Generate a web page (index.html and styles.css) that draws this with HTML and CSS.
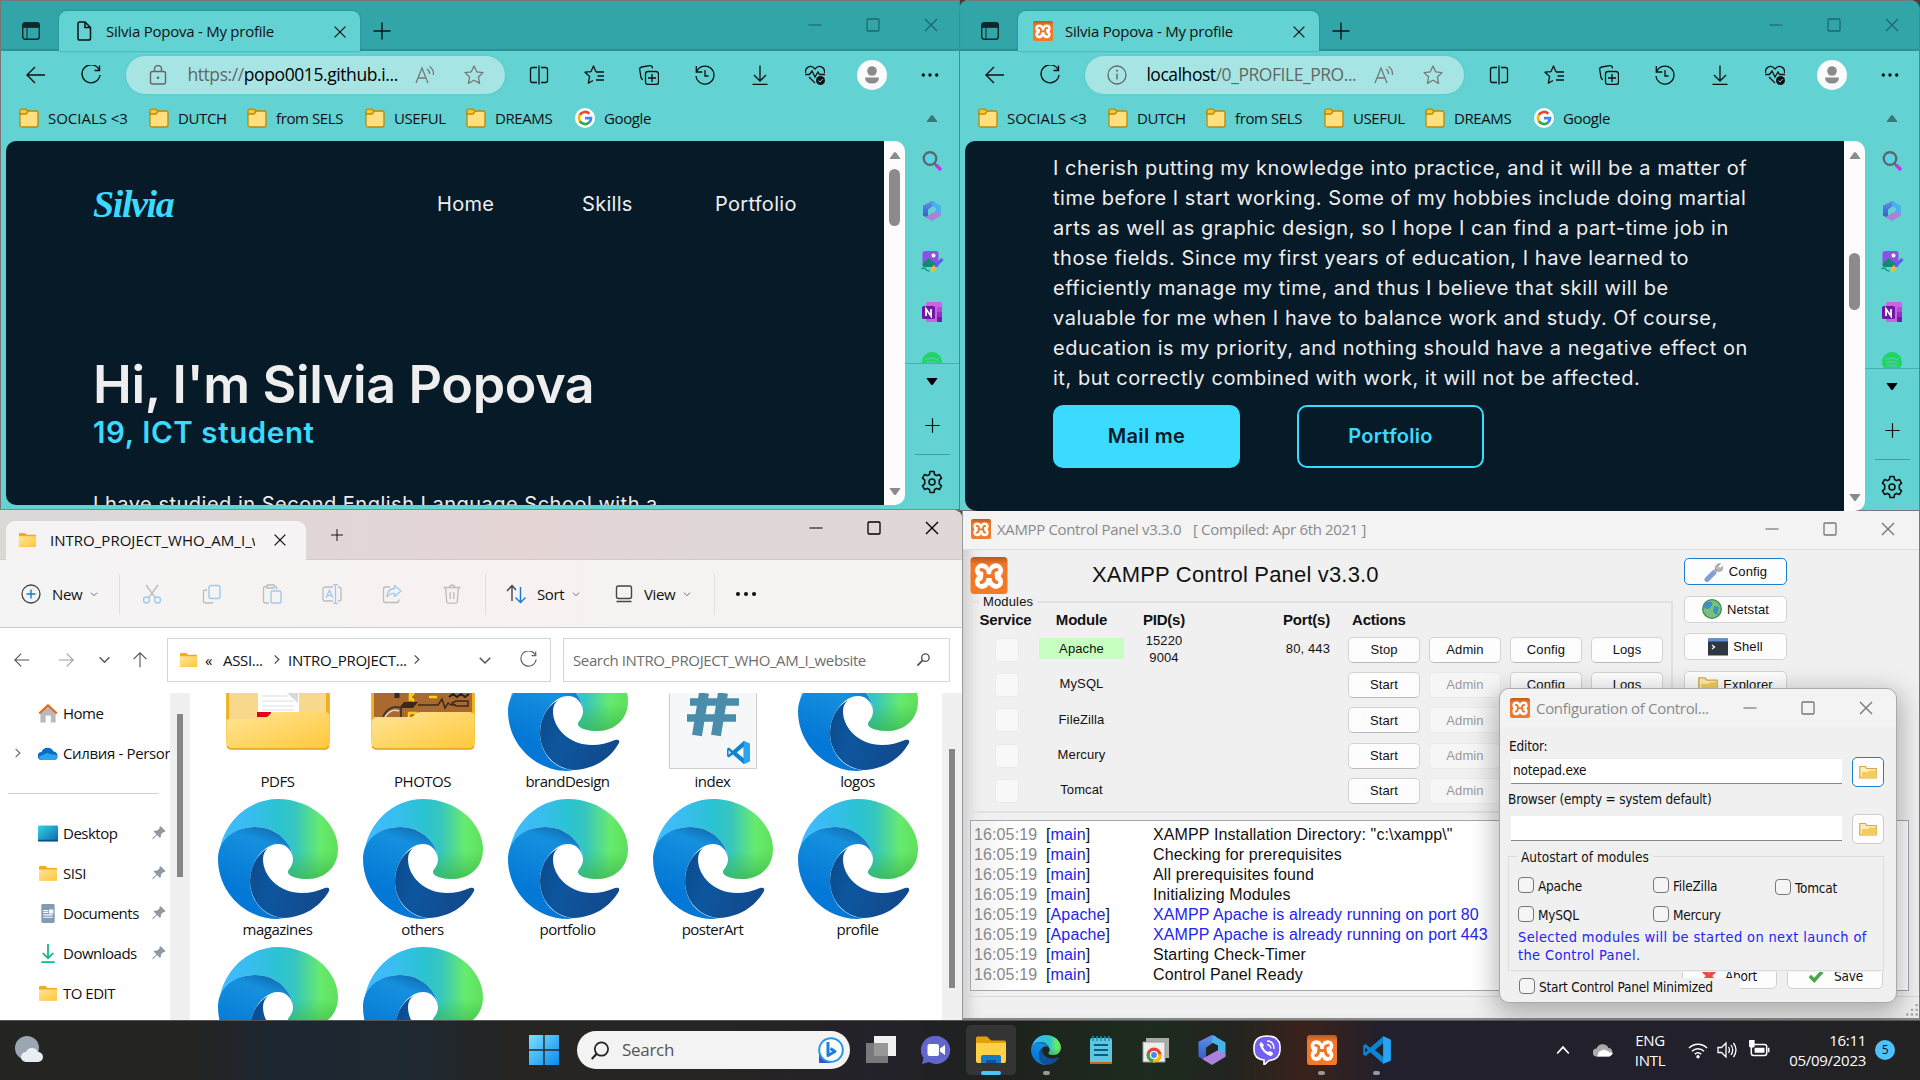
FILE: index.html
```html
<!DOCTYPE html>
<html lang="en">
<head>
<meta charset="utf-8">
<title>Desktop</title>
<link rel="stylesheet" href="styles.css">
</head>
<body>
<svg class="defs" aria-hidden="true">
  <defs>
    <linearGradient id="gTeal" x1="0" y1=".5" x2="1" y2=".5"><stop offset="0" stop-color="#42bbff"/><stop offset=".25" stop-color="#38bdf0"/><stop offset=".5" stop-color="#2bc3d2"/><stop offset=".64" stop-color="#36c6c0"/><stop offset=".85" stop-color="#66eb6e"/><stop offset="1" stop-color="#5fe05a"/></linearGradient>
    <linearGradient id="gShade" x1="0" y1="0" x2="0" y2="1"><stop offset=".55" stop-color="#3bb54a" stop-opacity="0"/><stop offset="1" stop-color="#3bb54a" stop-opacity=".75"/></linearGradient>
    <linearGradient id="gBlue" x1=".6" y1="0" x2=".3" y2="1"><stop offset="0" stop-color="#1272b8"/><stop offset=".15" stop-color="#1590de"/><stop offset=".7" stop-color="#0478d6"/></linearGradient>
    <linearGradient id="gNavy" x1="0" y1="0" x2="1" y2=".3"><stop offset="0" stop-color="#0b4a8c"/><stop offset=".4" stop-color="#0d569e"/><stop offset="1" stop-color="#124a8e"/></linearGradient>
    <linearGradient id="gFold" x1="0" y1="0" x2="1" y2="1"><stop offset="0" stop-color="#ffe596"/><stop offset="1" stop-color="#ffc83a"/></linearGradient>
    <linearGradient id="gDesk" x1="0" y1="0" x2="1" y2="1"><stop offset="0" stop-color="#34d6e4"/><stop offset="1" stop-color="#0a64b4"/></linearGradient>
    <linearGradient id="g365" x1="0" y1="0" x2="0" y2="1"><stop offset="0" stop-color="#6f8be8"/><stop offset=".5" stop-color="#3f78d8"/><stop offset="1" stop-color="#4a50c0"/></linearGradient>
    <linearGradient id="gOrange" x1="0" y1="0" x2="0" y2="1"><stop offset="0" stop-color="#b85b1c"/><stop offset=".2" stop-color="#f0762a"/><stop offset="1" stop-color="#f47a25"/></linearGradient>
    <linearGradient id="gWin" x1="0" y1="0" x2="1" y2="1"><stop offset="0" stop-color="#7ce0fb"/><stop offset="1" stop-color="#0a8bf0"/></linearGradient>
  </defs>
  <symbol id="edge" viewBox="0 0 120 120">
    <path id="edgeTop" fill="url(#gTeal)" d="M1 56C4 24 30 0 60 0c33 0 60 24 60 50 0 18-13 30-31 30-10 0-19-3-19-7 0-3 5-5 5-13C75 48 62 28 37 28 18 28 3 40 1 56Z"/>
    <path fill="url(#gShade)" d="M75 60C75 48 85 20 110 18c7 9 10 20 10 32 0 18-13 30-31 30-10 0-19-3-19-7 0-3 5-5 5-13Z"/>
    <path fill="url(#gBlue)" d="M0 60C0 42 15 28 37 28c21 0 37 15 38 32-1-9-7-15-15-15-14 0-28 18-28 37 0 22 16 37 34 37l-6 1C27 120 0 93 0 60Z"/>
    <path fill="url(#gNavy)" d="M50 49c-12 7-18 20-18 33 0 21 16 36 34 37 20-1 36-11 45-27 1-3-1-4-4-3-7 3-15 5-23 5-22 0-39-16-39-34 0-5 2-8 5-11Z"/>
  </symbol>
  <symbol id="xampp" viewBox="0 0 24 24"><rect width="24" height="24" rx="2.500" fill="url(#gOrange)"/><g fill="#fff"><circle cx="7.600" cy="8.800" r="4.700"/><circle cx="16.400" cy="8.800" r="4.700"/><circle cx="7.600" cy="16" r="4.700"/><circle cx="16.400" cy="16" r="4.700"/><path d="M8 7.800h8v9H8z"/></g><g fill="none" stroke="#f27526" stroke-width="2.300" stroke-linecap="round" stroke-linejoin="round"><path d="M7 8.300c2.300 0 2.800 1.600 2.400 3.900-.3 2.200-.3 3.900-2.400 4.200M17 8.300c-2.300 0-2.800 1.600-2.400 3.900.3 2.200.3 3.900 2.400 4.200M9.500 12.400h5"/></g></symbol>
  <symbol id="workspace" viewBox="0 0 20 20"><rect x="1.700" y="1.700" width="16.600" height="16.600" rx="2.500" fill="none" stroke="#0c2a2c" stroke-width="1.400"/><path d="M1.700 4.500q0-2.800 2.800-2.800h11q2.800 0 2.800 2.800v1.800H1.700zM6 6v12" fill="#0c2a2c" stroke="#0c2a2c"/></symbol>
  <symbol id="page" viewBox="0 0 20 20"><path d="M4 2.800Q4 1 5.800 1H11l5.500 5.500v10.700q0 1.800-1.800 1.800H5.800Q4 19 4 17.200zM11 1v5.500h5.500" fill="none" stroke="#111" stroke-width="1.500"/></symbol>
  <symbol id="close" viewBox="0 0 20 20"><path d="M4 4l12 12M16 4L4 16" stroke="currentColor" stroke-width="1.400"/></symbol>
  <symbol id="plus" viewBox="0 0 20 20"><path d="M10 1.500v17M1.500 10h17" stroke="currentColor" stroke-width="1.400"/></symbol>
  <symbol id="min" viewBox="0 0 20 20"><path d="M3.500 10h13" stroke="currentColor" stroke-width="1.200"/></symbol>
  <symbol id="max" viewBox="0 0 20 20"><rect x="4" y="4" width="12" height="12" rx="1" fill="none" stroke="currentColor" stroke-width="1.300"/></symbol>
  <symbol id="back" viewBox="0 0 20 20"><path d="M19 10H1.500M9 2L1 10l8 8" fill="none" stroke="currentColor" stroke-width="1.400"/></symbol>
  <symbol id="refresh" viewBox="0 0 20 20"><path d="M18 4.500A9 9 0 1 0 19 10M18.500 .5v5h-5" fill="none" stroke="currentColor" stroke-width="1.400"/></symbol>
  <symbol id="lock" viewBox="0 0 20 20"><rect x="2.500" y="6.500" width="15" height="12.500" rx="2" fill="none" stroke="#666" stroke-width="1.400"/><path d="M6.500 6.500V4a3.500 3.500 0 0 1 7 0v2.500" fill="none" stroke="#666" stroke-width="1.400"/><circle cx="10" cy="12.700" r="1.300" fill="#666"/></symbol>
  <symbol id="info" viewBox="0 0 20 20"><circle cx="10" cy="10" r="9" fill="none" stroke="#666" stroke-width="1.300"/><path d="M10 8.500v6" stroke="#666" stroke-width="1.400"/><circle cx="10" cy="5.800" r="1" fill="#666"/></symbol>
  <symbol id="read" viewBox="0 0 20 20"><path d="M1 18L7 3l6 15M3 13h8M12 4q3 2 2.500 5M14.500 1.500Q19 4.500 18.500 10" fill="none" stroke="#777" stroke-width="1.300"/></symbol>
  <symbol id="star" viewBox="0 0 20 20"><path d="M10 1l2.700 5.800 6.300.8-4.600 4.400 1.200 6.400L10 15.300l-5.600 3.100 1.200-6.400L1 7.600l6.300-.8z" fill="none" stroke="#777" stroke-width="1.300" stroke-linejoin="round"/></symbol>
  <symbol id="split" viewBox="0 0 20 20"><path d="M8 2.500H3.500q-2 0-2 2v11q0 2 2 2H8M12 2.500h4.500q2 0 2 2v11q0 2-2 2H12M10 .5v19" fill="none" stroke="#111" stroke-width="1.300"/></symbol>
  <symbol id="favs" viewBox="0 0 20 20"><path d="M13 6.800L11.800 6.600 9.500 1 7 6.600l-6 .6 4.600 4.300-1.300 6.700 4.700-2.700M12 7h8M13.500 11H20M12 15h8" fill="none" stroke="#111" stroke-width="1.300" stroke-linejoin="round"/></symbol>
  <symbol id="collect" viewBox="0 0 20 20"><rect x="6.500" y="6.500" width="13" height="13" rx="2.500" fill="none" stroke="#111" stroke-width="1.300"/><path d="M13 9v8M9 13h8M4 14.500Q2.500 14.500 2 12.500L.7 4.500Q.5 2.500 2.500 2L11 .7q2.200-.2 2.500 2.500" fill="none" stroke="#111" stroke-width="1.300"/></symbol>
  <symbol id="history" viewBox="0 0 20 20"><path d="M1.500 7A9 9 0 1 1 1 11M1.300 1v6h6M10 5v6h3.500" fill="none" stroke="#111" stroke-width="1.300"/></symbol>
  <symbol id="download" viewBox="0 0 20 20"><path d="M10 .5v15M4 10l6 6 6-6M2.500 19.300h15" fill="none" stroke="#111" stroke-width="1.300"/></symbol>
  <symbol id="health" viewBox="0 0 20 20"><path d="M.5 8C-.3 2 6-1 10 4c4-5 10.300-2 9.500 4M0 9.500h4.500L7 6l3 6 3-5 1.500 2.500H20M4 12l6 6" fill="none" stroke="#111" stroke-width="1.300"/><circle cx="15.500" cy="15.500" r="4.500" fill="#111"/><path d="M13.500 15.500l1.500 1.500 2.700-3" fill="none" stroke="#62d2d3" stroke-width="1"/></symbol>
  <symbol id="avatar" viewBox="0 0 30 30"><circle cx="15" cy="15" r="15" fill="#fbfbfb"/><circle cx="15" cy="11" r="4.800" fill="#8b8b8b"/><path d="M8 17.500h14q0 6-7 6t-7-6z" fill="#8b8b8b"/></symbol>
  <symbol id="dots" viewBox="0 0 20 20"><g fill="#111"><circle cx="3.300" cy="10" r="1.700"/><circle cx="10" cy="10" r="1.700"/><circle cx="16.700" cy="10" r="1.700"/></g></symbol>
  <symbol id="bookmark" viewBox="0 0 20 20"><rect x="1" y="3" width="18" height="16" rx="2" fill="#ffdf7e" stroke="#b98a0d" stroke-width="1.300"/><path d="M1 6V3q0-1.800 1.800-1.800H7L9 3.500 7 6z" fill="#ffc929" stroke="#b98a0d" stroke-width="1.300"/></symbol>
  <symbol id="google" viewBox="0 0 20 20"><circle cx="10" cy="10" r="10" fill="#fff"/><g fill="none" stroke-width="2.700"><path d="M14.300 5.700A6 6 0 0 0 4.800 7" stroke="#ea4335"/><path d="M4.800 7a6 6 0 0 0 0 6" stroke="#fbbc05"/><path d="M4.800 13a6 6 0 0 0 9.200 1.500" stroke="#34a853"/><path d="M14 14.500q2-1.900 2-4.300H10" stroke="#4285f4"/></g></symbol>
  <symbol id="triUp" viewBox="0 0 12 12"><path d="M1 10h10q1 0 0-1L7 3.500q-1-1-2 0L1 9q-1 1 0 1z" fill="currentColor"/></symbol>
  <symbol id="triDown" viewBox="0 0 12 12"><path d="M1 2h10q1 0 0 1L7 8.500q-1 1-2 0L1 3q-1-1 0-1z" fill="currentColor"/></symbol>
  <symbol id="lens" viewBox="0 0 20 20"><path d="M14 14l5 5" stroke="#d02ff0" stroke-width="3.500"/><path d="M11.500 11.500l3 3" stroke="#6b5f78" stroke-width="2"/><circle cx="8" cy="7.500" r="6.300" fill="#5ad3e2" stroke="#5b6468" stroke-width="2.200"/></symbol>
  <symbol id="m365" viewBox="0 0 20 20"><path d="M10 0L1 4.500v10l5 2.800V8.500l6.500-4.700V.8z" fill="url(#g365)"/><path d="M11 .3L19 5v9l-5-2.800V7l-4.500-2.300z" fill="#45b4ea"/><path d="M3.500 16L10 20l9-5.500v-1.800l-5.500-2.400L6 14.500z" fill="#ad80dc"/></symbol>
  <symbol id="image" viewBox="0 0 22 22"><rect x="1" y="0" width="16" height="16" rx="2.500" fill="#8c52e6"/><circle cx="12" cy="4.500" r="2" fill="#fff"/><path d="M1 13l6-6 9 7q-1 2-3 2H4q-3 0-3-3z" fill="#138b68"/><path d="M21 8l-8 8" stroke="#5a5cf0" stroke-width="3"/><path d="M12 14l3 3q-2 5-6 4 1-5 3-7z" fill="#fbb634"/><path d="M0 18q3-2 4 0t4 2" fill="none" stroke="#119b76" stroke-width="1.500"/></symbol>
  <symbol id="onenote" viewBox="0 0 20 20"><rect x="4" y="0" width="16" height="20" rx="1.500" fill="#cb63e6"/><path d="M15 5h5v5h-5z" fill="#b04bd0"/><path d="M15 10h5v5h-5z" fill="#9332bf"/><path d="M15 15h5v5h-5z" fill="#7719aa"/><rect y="4" width="13" height="13" rx="1.500" fill="#6f18a5"/><path d="M4 14V7l5 7V7" fill="none" stroke="#fff" stroke-width="1.700"/></symbol>
  <symbol id="spotify" viewBox="0 0 20 20"><circle cx="10" cy="10" r="10" fill="#1ed760"/><path d="M4 7q7-2 12 1.200M5 10.500q6-1.800 10 1M5.500 13.800q5-1.200 8.500.8" fill="none" stroke="#53c6b5" stroke-width="1.600" stroke-linecap="round"/></symbol>
  <symbol id="gear" viewBox="0 0 24 24"><path d="M10 1.500h4l.6 3 2 1.100 2.900-1 2 3.500-2.200 2v3.800l2.200 2-2 3.500-2.900-1-2 1.100-.6 3h-4l-.6-3-2-1.100-2.900 1-2-3.500 2.200-2v-3.800l-2.200-2 2-3.500 2.900 1 2-1.100z" fill="none" stroke="#111" stroke-width="1.600" stroke-linejoin="round"/><circle cx="12" cy="12" r="3" fill="none" stroke="#111" stroke-width="1.600"/></symbol>
  <symbol id="folder" viewBox="0 0 20 16"><path d="M1 1.500Q1 .5 2 .5h5.500l2 2H18q1 0 1 1V15H1z" fill="#f3ac18"/><path d="M1 4h18v10q0 1-1 1H2q-1 0-1-1z" fill="url(#gFold)"/></symbol>
  <symbol id="chev" viewBox="0 0 12 12"><path d="M1.500 4l4.500 4.500L10.500 4" fill="none" stroke="currentColor" stroke-width="1.300"/></symbol>
  <symbol id="chevR" viewBox="0 0 12 12"><path d="M4 1.500L8.500 6 4 10.500" fill="none" stroke="currentColor" stroke-width="1.500"/></symbol>
  <symbol id="newItem" viewBox="0 0 20 20"><circle cx="10" cy="10" r="9" fill="none" stroke="#444" stroke-width="1.300"/><path d="M10 5.500v9M5.500 10h9" stroke="#0f7bd3" stroke-width="1.400"/></symbol>
  <symbol id="cut" viewBox="0 0 20 20"><path d="M4 1l9.500 13M16 1L6.500 14" stroke="#bdbdbd" stroke-width="1.300"/><g fill="none" stroke="#9ccbee" stroke-width="1.400"><circle cx="4.500" cy="16" r="3"/><circle cx="15.500" cy="16" r="3"/></g></symbol>
  <symbol id="copy" viewBox="0 0 20 20"><path d="M5 6H3.500q-2 0-2 2v9q0 2 2 2H9q2 0 2-1" fill="none" stroke="#bdbdbd" stroke-width="1.300"/><rect x="7" y="1.500" width="11" height="13" rx="2" fill="none" stroke="#9ccbee" stroke-width="1.400"/></symbol>
  <symbol id="paste" viewBox="0 0 20 20"><path d="M5 2.500H3.500q-2 0-2 2V17q0 2 2 2H7M13 2.500q2 0 2 3M5 1h7v3H5z" fill="none" stroke="#bdbdbd" stroke-width="1.300"/><rect x="9" y="7" width="10" height="12" rx="1.500" fill="none" stroke="#9ccbee" stroke-width="1.400"/></symbol>
  <symbol id="rename" viewBox="0 0 20 20"><path d="M11 3H3Q1 3 1 5v10q0 2 2 2h8M16 3q3 0 3 2v10q0 2-3 2" fill="none" stroke="#bdbdbd" stroke-width="1.300"/><path d="M4 14l3.500-8L11 14M5 11.500h5M13.500.5v19M11 .5h5M11 19.500h5" fill="none" stroke="#9ccbee" stroke-width="1.300"/></symbol>
  <symbol id="share" viewBox="0 0 20 20"><path d="M8 3H3.500q-2 0-2 2v11.500q0 2 2 2H15q2 0 2-3" fill="none" stroke="#bdbdbd" stroke-width="1.300"/><path d="M12.500 1.500L19 7l-6.500 5.500V9.500Q8 9 5 13q0-8 7.500-8.500z" fill="none" stroke="#9ccbee" stroke-width="1.300" stroke-linejoin="round"/></symbol>
  <symbol id="trash" viewBox="0 0 20 20"><path d="M1.500 3.500h17M7.500 3.500q0-2.500 2.500-2.500t2.500 2.500M3.500 4l1.300 14q.2 1.200 1.500 1.200h7.400q1.300 0 1.500-1.200L16.500 4M8.200 8v7M11.800 8v7" fill="none" stroke="#bdbdbd" stroke-width="1.300"/></symbol>
  <symbol id="sort" viewBox="0 0 20 20"><path d="M6 17V2M1 7l5-5.500L10 6" fill="none" stroke="#444" stroke-width="1.400"/><path d="M14.500 3v15M9.500 13.500l5 5 5-5" fill="none" stroke="#0f7bd3" stroke-width="1.400"/></symbol>
  <symbol id="view" viewBox="0 0 20 20"><rect x="2.500" y="2" width="15" height="12.500" rx="2" fill="none" stroke="#444" stroke-width="1.400"/><path d="M2.500 17.500h15" stroke="#444" stroke-width="1.400"/></symbol>
  <symbol id="find" viewBox="0 0 16 16"><circle cx="10" cy="6" r="4" fill="none" stroke="#555" stroke-width="1.500"/><path d="M7 9l-5.500 5.500" stroke="#555" stroke-width="2"/></symbol>
  <symbol id="home" viewBox="0 0 20 20"><path d="M2 9l8-7 8 7v10.500h-5V12H7.500v7.500H2z" fill="#b9b9b9"/><path d="M.8 10L10 1.300 19.200 10" fill="none" stroke="#e06a1a" stroke-width="2.300" stroke-linejoin="round"/></symbol>
  <symbol id="cloud" viewBox="0 0 20 14"><path d="M4 13.500a4 4 0 0 1-.5-8A6.500 6.500 0 0 1 15.500 5 4.300 4.300 0 0 1 16 13.500z" fill="#0a6cc4"/><path d="M4 13.500Q1 13 1 10l8-3.500 5 1.500q6 0 5.500 3-.5 2.500-3.500 2.500z" fill="#2aa4ea"/></symbol>
  <symbol id="desktop" viewBox="0 0 20 16"><rect width="20" height="16" rx="1" fill="url(#gDesk)"/><path d="M0 15h20" stroke="#0b4f86" stroke-width="1.500"/></symbol>
  <symbol id="docs" viewBox="0 0 20 20"><rect x="3" width="14" height="20" rx="1.500" fill="#839bb5"/><path d="M5 7h5M5 9h5M5 11.500h10M5 14h10M11.500 6.500h3.500v3h-3.500z" stroke="#fff" stroke-width="1.200" fill="#fff"/></symbol>
  <symbol id="dl" viewBox="0 0 20 20"><path d="M10 0v15M4.500 9.500L10 15l5.500-5.500M3 19h14" fill="none" stroke="#18b493" stroke-width="1.900"/></symbol>
  <symbol id="pin" viewBox="0 0 14 14"><path d="M8.500 0L13.500 5l-1 1.200-1.200-.2-2.300 2.500q.3 2-1 3.500L5 9l-4.500 4.500V12L4.300 8.200 1.500 5.500q1.500-1.300 3.700-1l2.500-2.300-.2-1.200z" fill="#8d9aa4"/></symbol>
  <symbol id="globe" viewBox="0 0 20 20"><circle cx="10" cy="10" r="9.300" fill="#79c07c" stroke="#3f8d46" stroke-width="1.300"/><path d="M6 3q6-1 4 3t-5 4-3-3 4-4zM12 7l5 1-2 8-4-3z" fill="#3d8fc8"/></symbol>
  <symbol id="wrench" viewBox="0 0 20 20"><path d="M3 17.500l7-7" stroke="#7f9fd8" stroke-width="5" stroke-linecap="round"/><path d="M10 10l4-4" stroke="#a8acb0" stroke-width="3"/><path d="M18.500 4.500q1 5-4 5-4-1-3-5 1-3 5-3l-2.500 3 2 2z" fill="#b5b8bb" stroke="#888" stroke-width=".6"/></symbol>
  <symbol id="shell" viewBox="0 0 20 17"><rect width="20" height="17" fill="#2e3640"/><path d="M0 0h20v3H0z" fill="#5c8fd6"/><path d="M4 6.500l2.500 2L4 10.500" fill="none" stroke="#fff" stroke-width="1.300"/></symbol>
  <symbol id="yfold" viewBox="0 0 18 14"><path d="M.8 13V1.500h5.500l1.500 2h9.400V13z" fill="#fdeeb4" stroke="#dba445" stroke-width="1.200"/><path d="M3 13V7h6l1.500-1.500h6.700V13z" fill="#f3cd5b"/></symbol>
  <symbol id="vscode" viewBox="0 0 24 24"><path d="M17 1l6 2.700v16.600L17 23 6.500 13.800 2.800 16.800 1 15.700V8.300l1.800-1.100 3.700 3zM17 6.500L10.300 12l6.700 5.500zM2.500 9.800v4.400L4.800 12z" fill="#0d83d4" fill-rule="evenodd"/><path d="M17 1l6 2.700v16.600L17 23z" fill="#27a5f2"/></symbol>
  <symbol id="winlogo" viewBox="0 0 30 30"><path d="M0 0h14.300v14.300H0zM15.700 0H30v14.300H15.700zM0 15.700h14.300V30H0zM15.700 15.700H30V30H15.700z" fill="url(#gWin)"/></symbol>
  <symbol id="cssfile" viewBox="0 0 88 116"><rect x=".5" y=".5" width="87" height="115" fill="#f6f7f8" stroke="#cfcfcf"/><g stroke="#4a8dab" stroke-width="10"><path d="M35 40L28 82.500M54 40L47 82.500" /><path d="M21 49h49M18 65h49" stroke-width="7.500"/></g><use href="#vscode" x="57" y="87" width="25" height="25"/></symbol>
  <symbol id="bigfold" viewBox="0 0 106 96"><path d="M0 0h106v90H0z" fill="#f2b01f"/><path d="M3 0h99v70H3z" fill="#f7d88c"/></symbol>
  <symbol id="bigfoldFront" viewBox="0 0 106 40"><path d="M0 10Q0 7 4 7h32q4 0 7-3l2-2q2-2 6-2h49q6 0 6 5v28q0 5-5 5H5q-5 0-5-5z" fill="url(#gFold)"/><path d="M1 35q1 3 4 3h96q3 0 4-3" fill="none" stroke="#e0a21c" stroke-width="1.500"/></symbol>
</svg>

<div class="desktop">

<section class="win browser left">
  <header class="titlebar">
    <svg class="i20 ws"><use href="#workspace"/></svg>
    <div class="tab"><svg class="i20"><use href="#page"/></svg><span>Silvia Popova - My profile</span><svg class="tabx"><use href="#close"/></svg></div>
    <svg class="newtab"><use href="#plus"/></svg>
    <div class="wbtns"><svg><use href="#min"/></svg><svg><use href="#max"/></svg><svg><use href="#close"/></svg></div>
  </header>
  <div class="toolbar">
    <i class="cell"><svg class="i20"><use href="#back"/></svg></i><i class="cell"><svg class="i20"><use href="#refresh"/></svg></i>
    <div class="address"><svg class="i20"><use href="#lock"/></svg><span class="url"><span class="dim">https://</span>popo0015.github.i...</span><svg class="i20"><use href="#read"/></svg><svg class="i20 st"><use href="#star"/></svg></div>
    <i class="cell"><svg class="i20"><use href="#split"/></svg></i><i class="cell"><svg class="i20"><use href="#favs"/></svg></i><i class="cell"><svg class="i20"><use href="#collect"/></svg></i><i class="cell"><svg class="i20"><use href="#history"/></svg></i><i class="cell"><svg class="i20"><use href="#download"/></svg></i><i class="cell"><svg class="i20"><use href="#health"/></svg></i><i class="cell wide"><svg class="i30"><use href="#avatar"/></svg></i><i class="cell wide"><svg class="i20"><use href="#dots"/></svg></i>
  </div>
  <div class="favbar">
    <span class="f1"><svg class="i20"><use href="#bookmark"/></svg>SOCIALS &lt;3</span><span class="f2"><svg class="i20"><use href="#bookmark"/></svg>DUTCH</span><span class="f3"><svg class="i20"><use href="#bookmark"/></svg>from SELS</span><span class="f4"><svg class="i20"><use href="#bookmark"/></svg>USEFUL</span><span class="f5"><svg class="i20"><use href="#bookmark"/></svg>DREAMS</span><span class="f6"><svg class="i20"><use href="#google"/></svg>Google</span>
    <svg class="tri grey"><use href="#triUp"/></svg>
  </div>
  <div class="content">
    <main class="page hero">
      <nav><b class="logo">Silvia</b><a>Home</a><a>Skills</a><a>Portfolio</a></nav>
      <h1>Hi, I'm Silvia Popova</h1>
      <h2>19, ICT student</h2>
      <p>I have studied in Second English Language School with a</p>
    </main>
    <div class="scroll"><svg><use href="#triUp"/></svg><i class="thumb"></i><svg class="end"><use href="#triDown"/></svg></div>
    <aside class="side">
      <div class="apps"><svg><use href="#lens"/></svg><svg><use href="#m365"/></svg><svg class="img"><use href="#image"/></svg><svg><use href="#onenote"/></svg><svg><use href="#spotify"/></svg></div>
      <svg class="tri"><use href="#triDown"/></svg><svg class="add"><use href="#plus"/></svg><hr><svg class="gear"><use href="#gear"/></svg>
    </aside>
  </div>
</section>

<section class="win browser right">
  <header class="titlebar">
    <svg class="i20 ws"><use href="#workspace"/></svg>
    <div class="tab"><svg class="i20"><use href="#xampp"/></svg><span>Silvia Popova - My profile</span><svg class="tabx"><use href="#close"/></svg></div>
    <svg class="newtab"><use href="#plus"/></svg>
    <div class="wbtns"><svg><use href="#min"/></svg><svg><use href="#max"/></svg><svg><use href="#close"/></svg></div>
  </header>
  <div class="toolbar">
    <i class="cell"><svg class="i20"><use href="#back"/></svg></i><i class="cell"><svg class="i20"><use href="#refresh"/></svg></i>
    <div class="address"><svg class="i20"><use href="#info"/></svg><span class="url">localhost<span class="dim">/0_PROFILE_PRO...</span></span><svg class="i20"><use href="#read"/></svg><svg class="i20 st"><use href="#star"/></svg></div>
    <i class="cell"><svg class="i20"><use href="#split"/></svg></i><i class="cell"><svg class="i20"><use href="#favs"/></svg></i><i class="cell"><svg class="i20"><use href="#collect"/></svg></i><i class="cell"><svg class="i20"><use href="#history"/></svg></i><i class="cell"><svg class="i20"><use href="#download"/></svg></i><i class="cell"><svg class="i20"><use href="#health"/></svg></i><i class="cell wide"><svg class="i30"><use href="#avatar"/></svg></i><i class="cell wide"><svg class="i20"><use href="#dots"/></svg></i>
  </div>
  <div class="favbar">
    <span class="f1"><svg class="i20"><use href="#bookmark"/></svg>SOCIALS &lt;3</span><span class="f2"><svg class="i20"><use href="#bookmark"/></svg>DUTCH</span><span class="f3"><svg class="i20"><use href="#bookmark"/></svg>from SELS</span><span class="f4"><svg class="i20"><use href="#bookmark"/></svg>USEFUL</span><span class="f5"><svg class="i20"><use href="#bookmark"/></svg>DREAMS</span><span class="f6"><svg class="i20"><use href="#google"/></svg>Google</span>
    <svg class="tri grey"><use href="#triUp"/></svg>
  </div>
  <div class="content">
    <main class="page bio">
      <p>I cherish putting my knowledge into practice, and it will be a matter of<br>time before I start working. Some of my hobbies include doing martial<br>arts as well as graphic design, so I hope I can find a part-time job in<br>those fields. Since my first years of education, I have learned to<br>efficiently manage my time, and thus I believe that skill will be<br>valuable for me when I have to balance work and study. Of course,<br>education is my priority, and nothing should have a negative effect on<br>it, but correctly combined with work, it will not be affected.</p>
      <div class="ctas"><a class="cta solid">Mail me</a><a class="cta">Portfolio</a></div>
    </main>
    <div class="scroll"><svg><use href="#triUp"/></svg><i class="thumb"></i><svg class="end"><use href="#triDown"/></svg></div>
    <aside class="side">
      <div class="apps"><svg><use href="#lens"/></svg><svg><use href="#m365"/></svg><svg class="img"><use href="#image"/></svg><svg><use href="#onenote"/></svg><svg><use href="#spotify"/></svg></div>
      <svg class="tri"><use href="#triDown"/></svg><svg class="add"><use href="#plus"/></svg><hr><svg class="gear"><use href="#gear"/></svg>
    </aside>
  </div>
</section>

<section class="win explorer">
  <header class="extitle">
    <div class="extab"><svg class="fold"><use href="#folder"/></svg><span>INTRO_PROJECT_WHO_AM_I_w</span><svg class="i20"><use href="#close"/></svg></div>
    <svg class="explus"><use href="#plus"/></svg>
    <div class="wbtns"><svg><use href="#min"/></svg><svg><use href="#max"/></svg><svg><use href="#close"/></svg></div>
  </header>
  <div class="cmds">
    <span class="cmd new"><svg class="i20"><use href="#newItem"/></svg>New<svg class="cv"><use href="#chev"/></svg></span>
    <div class="grp"><svg class="i20"><use href="#cut"/></svg><svg class="i20"><use href="#copy"/></svg><svg class="i20"><use href="#paste"/></svg><svg class="i20"><use href="#rename"/></svg><svg class="i20"><use href="#share"/></svg><svg class="i20"><use href="#trash"/></svg></div>
    <span class="cmd sort"><svg class="i20"><use href="#sort"/></svg>Sort<svg class="cv"><use href="#chev"/></svg></span>
    <span class="cmd view"><svg class="i20"><use href="#view"/></svg>View<svg class="cv"><use href="#chev"/></svg></span>
    <svg class="more"><use href="#dots"/></svg>
  </div>
  <div class="navrow">
    <svg class="nb"><use href="#back"/></svg><svg class="nb fwd"><use href="#back"/></svg><svg class="nc"><use href="#chev"/></svg><svg class="nb parent"><use href="#back"/></svg>
    <div class="path"><svg class="fold"><use href="#folder"/></svg><span class="p0">«</span><span class="p1">ASSI...</span><svg class="cr"><use href="#chevR"/></svg><span class="p2">INTRO_PROJECT...</span><svg class="cr"><use href="#chevR"/></svg><svg class="nc2"><use href="#chev"/></svg><svg class="rf"><use href="#refresh"/></svg></div>
    <div class="search"><span>Search INTRO_PROJECT_WHO_AM_I_website</span><svg><use href="#find"/></svg></div>
  </div>
  <div class="exbody">
    <ul class="tree">
      <li><svg><use href="#home"/></svg><span>Home</span></li>
      <li class="od"><svg class="arr"><use href="#chevR"/></svg><svg><use href="#cloud"/></svg><span>Силвия - Personal</span></li>
      <li class="rule"></li>
      <li><svg><use href="#desktop"/></svg><span>Desktop</span><svg class="pin"><use href="#pin"/></svg></li>
      <li><svg><use href="#folder"/></svg><span>SISI</span><svg class="pin"><use href="#pin"/></svg></li>
      <li><svg><use href="#docs"/></svg><span>Documents</span><svg class="pin"><use href="#pin"/></svg></li>
      <li><svg><use href="#dl"/></svg><span>Downloads</span><svg class="pin"><use href="#pin"/></svg></li>
      <li><svg><use href="#folder"/></svg><span>TO EDIT</span></li>
    </ul>
    <div class="exscroll"><i></i></div>
    <div class="files">
      <figure><div class="bf"><svg class="bfb"><use href="#bigfold"/></svg><svg class="art" viewBox="0 0 106 24"><path d="M33 0h41v24H33z" fill="#fff"/><path d="M62 0l11 10v-10z" fill="#d9d9d9"/><path d="M37 3h26M37 8h32M37 13h32M37 17h32" stroke="#ddd"/><path d="M32 19h14v5H32z" fill="#e3001b"/></svg><svg class="bff"><use href="#bigfoldFront"/></svg></div><figcaption>PDFS</figcaption></figure>
      <figure><div class="bf"><svg class="bfb"><use href="#bigfold"/></svg><svg class="art" viewBox="0 0 106 24"><path d="M4 0h98v24H4z" fill="#a9692f"/><path d="M27 0v5" stroke="#3b2a1c" stroke-width="5"/><path d="M29 15l5-6h14l-5 6z" fill="#3b2a1c"/><path d="M48 12h20l4-6 3 9 3-5 3 2h5M82 10l4-2h12v5H86z" fill="none" stroke="#3b2a1c" stroke-width="1.500"/><path d="M13 24q6-13 18-9v9" fill="none" stroke="#4a3828" stroke-width="2"/><path d="M15 24q6-9 14-6" fill="none" stroke="#ddd" stroke-width="1.500"/><path d="M40 0v8M44 0l-4 4 4 4M59 4h8M39 24v-4h8" fill="none" stroke="#f7d117" stroke-width="2.500"/><path d="M79 4l4-3 4 3 4-3 4 3 4-3" fill="none" stroke="#222" stroke-width="2"/></svg><svg class="bff"><use href="#bigfoldFront"/></svg></div><figcaption>PHOTOS</figcaption></figure>
      <figure><svg class="big"><use href="#edge"/></svg><figcaption>brandDesign</figcaption></figure>
      <figure><svg class="css"><use href="#cssfile"/></svg><figcaption>index</figcaption></figure>
      <figure><svg class="big"><use href="#edge"/></svg><figcaption>logos</figcaption></figure>
      <figure><svg class="big"><use href="#edge"/></svg><figcaption>magazines</figcaption></figure>
      <figure><svg class="big"><use href="#edge"/></svg><figcaption>others</figcaption></figure>
      <figure><svg class="big"><use href="#edge"/></svg><figcaption>portfolio</figcaption></figure>
      <figure><svg class="big"><use href="#edge"/></svg><figcaption>posterArt</figcaption></figure>
      <figure><svg class="big"><use href="#edge"/></svg><figcaption>profile</figcaption></figure>
      <figure><svg class="big"><use href="#edge"/></svg></figure>
      <figure><svg class="big"><use href="#edge"/></svg></figure>
    </div>
    <div class="exscroll r"><i></i></div>
  </div>
</section>

<section class="win xampp">
  <header class="xtitle"><svg class="i20"><use href="#xampp"/></svg><span class="xt">XAMPP Control Panel v3.3.0</span><span class="xc">[ Compiled: Apr 6th 2021 ]</span><div class="wbtns"><svg><use href="#min"/></svg><svg><use href="#max"/></svg><svg><use href="#close"/></svg></div></header>
  <div class="xmain">
    <div class="xleft">
      <div class="xhead"><svg><use href="#xampp"/></svg><h3>XAMPP Control Panel v3.3.0</h3></div>
      <div class="modules">
        <span class="legend">Modules</span>
        <div class="mrow mh"><span>Service</span><span>Module</span><span>PID(s)</span><span class="port">Port(s)</span><span class="act">Actions</span></div>
        <div class="mrow"><i class="box"></i><span class="on">Apache</span><span class="pids">15220<br>9004</span><span class="port">80, 443</span><button>Stop</button><button>Admin</button><button>Config</button><button>Logs</button></div>
        <div class="mrow"><i class="box"></i><span>MySQL</span><span></span><span></span><button>Start</button><button class="off">Admin</button><button>Config</button><button>Logs</button></div>
        <div class="mrow"><i class="box"></i><span>FileZilla</span><span></span><span></span><button>Start</button><button class="off">Admin</button></div>
        <div class="mrow"><i class="box"></i><span>Mercury</span><span></span><span></span><button>Start</button><button class="off">Admin</button></div>
        <div class="mrow"><i class="box"></i><span>Tomcat</span><span></span><span></span><button>Start</button><button class="off">Admin</button></div>
      </div>
    </div>
    <div class="tools">
      <button class="focus"><svg class="i20"><use href="#wrench"/></svg>Config</button>
      <button><svg class="i20"><use href="#globe"/></svg>Netstat</button>
      <button><svg class="i20"><use href="#shell"/></svg>Shell</button>
      <button><svg class="i20"><use href="#yfold"/></svg>Explorer</button>
    </div>
  </div>
  <div class="log">
    <div><time>16:05:19</time><span>[<b>main</b>]</span><span>XAMPP Installation Directory: "c:\xampp\"</span></div>
    <div><time>16:05:19</time><span>[<b>main</b>]</span><span>Checking for prerequisites</span></div>
    <div><time>16:05:19</time><span>[<b>main</b>]</span><span>All prerequisites found</span></div>
    <div><time>16:05:19</time><span>[<b>main</b>]</span><span>Initializing Modules</span></div>
    <div><time>16:05:19</time><span>[<b>Apache</b>]</span><span class="bl">XAMPP Apache is already running on port 80</span></div>
    <div><time>16:05:19</time><span>[<b>Apache</b>]</span><span class="bl">XAMPP Apache is already running on port 443</span></div>
    <div><time>16:05:19</time><span>[<b>main</b>]</span><span>Starting Check-Timer</span></div>
    <div><time>16:05:19</time><span>[<b>main</b>]</span><span>Control Panel Ready</span></div>
  </div>
  <footer class="status"><svg viewBox="0 0 12 12"><path d="M9 0h2v2H9zM5 4h2v2H5zM9 4h2v2H9zM1 8h2v2H1zM5 8h2v2H5zM9 8h2v2H9z" fill="#aaa"/></svg></footer>
</section>

<section class="win dialog">
  <header class="dtitle"><svg class="i20"><use href="#xampp"/></svg><span>Configuration of Control...</span><div class="wbtns"><svg><use href="#min"/></svg><svg><use href="#max"/></svg><svg><use href="#close"/></svg></div></header>
  <div class="dbody">
    <label class="l1">Editor:</label>
    <div class="irow"><div class="input">notepad.exe</div><button class="focus"><svg><use href="#yfold"/></svg></button></div>
    <label class="l2">Browser (empty = system default)</label>
    <div class="irow"><div class="input"></div><button><svg><use href="#yfold"/></svg></button></div>
    <div class="auto">
      <span class="legend">Autostart of modules</span>
      <div class="checks"><label><i></i>Apache</label><label><i></i>FileZilla</label><label class="tc"><i></i>Tomcat</label><label><i></i>MySQL</label><label><i></i>Mercury</label></div>
      <p>Selected modules will be started on next launch of<br>the Control Panel.</p>
    </div>
    <div class="dfoot">
      <button class="abort"><svg viewBox="0 0 14 14"><path d="M1 1l12 12M13 1L1 13" stroke="#ef4a4a" stroke-width="4.500"/></svg>Abort</button>
      <button class="save"><svg viewBox="0 0 18 16"><path d="M2 8l5 5 9-10" fill="none" stroke="#4ba34a" stroke-width="4"/></svg>Save</button>
      <label class="mini"><i></i>Start Control Panel Minimized</label>
    </div>
  </div>
</section>

<footer class="taskbar">
  <svg class="weather" viewBox="0 0 30 30"><circle cx="14" cy="13" r="12" fill="#9aa7b2"/><path d="M13 27a5 5 0 0 1 0-10 6.500 6.500 0 0 1 12 0 5 5 0 0 1 0 10z" fill="#e8eef3"/></svg>
  <svg class="start"><use href="#winlogo"/></svg>
  <div class="tsearch"><svg class="mag" viewBox="0 0 20 20"><circle cx="11" cy="8.500" r="7" fill="none" stroke="#222" stroke-width="1.800"/><path d="M6 13.500L.8 19" stroke="#222" stroke-width="2.200"/></svg><span>Search</span><svg class="bing" viewBox="0 0 28 28"><path d="M2 14v12q0 1 1 1h11z" fill="#2f55d4"/><circle cx="14" cy="14" r="11.800" fill="#fff" stroke="#2399e6" stroke-width="2"/><path d="M11 6v13.500l7-4-4.500-3" fill="none" stroke="#1c7fe0" stroke-width="3" stroke-linejoin="round"/></svg></div>
  <div class="tasks">
    <span><svg viewBox="0 0 30 30"><path d="M8 1h22v20H8z" fill="#f1f1f1"/><path d="M0 8h22v20H0z" fill="#888" fill-opacity=".85"/></svg></span>
    <span><svg viewBox="0 0 30 30"><path d="M15 1a14 14 0 1 1-7 26l-7 2 1.500-6A14 14 0 0 1 15 1z" fill="#6266cc"/><rect x="6.500" y="9" width="11.500" height="12" rx="2" fill="#fff"/><path d="M19 13.500l5-3.500v10l-5-3.500z" fill="#fff"/></svg></span>
    <span class="active"><svg viewBox="0 0 30 30"><path d="M0 3q0-1.500 1.500-1.500H11l4 4h13.500Q30 5.500 30 7v8H0z" fill="#e4a008"/><path d="M0 8h30v18q0 2-2 2H2q-2 0-2-2z" fill="#ffd04a"/><path d="M5 28v-6q0-2 2-2h16q2 0 2 2v6z" fill="#1679cc"/><path d="M10 28v-3h10v3" fill="#0b5394"/></svg></span>
    <span class="run"><svg><use href="#edge"/></svg></span>
    <span><svg viewBox="0 0 30 30"><rect x="4" y="3" width="22" height="26" rx="2" fill="#5cc8de"/><path d="M4 27h22v2H4z" fill="#c46522"/><path d="M8 10h14M8 15h14M8 20h14" stroke="#0b5a87" stroke-width="1.800"/><path d="M7 1v5M11 1v5M15 1v5M19 1v5M23 1v5" stroke="#1d8fb8" stroke-width="1.500"/></svg></span>
    <span><svg viewBox="0 0 30 30"><path d="M5 3h23v20H5z" fill="#aaa"/><path d="M2 7h22v20H2z" fill="#eee" stroke="#999"/><circle cx="13" cy="20" r="7.500" fill="#e94435"/><path d="M13 20l-7-3a8 8 0 0 0 6 10.500z" fill="#34a853"/><path d="M13 20l7.500-1a8 8 0 0 1-8.500 8.500z" fill="#fbbc05"/><circle cx="13" cy="20" r="3.500" fill="#4285f4" stroke="#fff" stroke-width="1.200"/></svg></span>
    <span><svg><use href="#m365"/></svg></span>
    <span><svg viewBox="0 0 30 30"><path d="M15 1q12 0 13 10v5q-1 9-11 9.500L12 30v-5Q2 24 2 15v-4Q3 1 15 1z" fill="#7360f2" stroke="#fff" stroke-width="1.600"/><path d="M9 7q-2 1-1 4 3 7 10 10 3 0 3-3l-3-2-2 1q-4-2-5-5l1-2z" fill="#fff"/><path d="M15 6q7 0 7 8M15 9.500q3.500.5 4 4" fill="none" stroke="#fff" stroke-width="1.400"/></svg></span>
    <span class="run"><svg><use href="#xampp"/></svg></span>
    <span class="run"><svg><use href="#vscode"/></svg></span>
  </div>
  <div class="tray">
    <svg class="up" viewBox="0 0 12 12"><path d="M1 9l5-5.500L11 9" fill="none" stroke="#fff" stroke-width="1.400"/></svg>
    <svg class="cl" viewBox="0 0 20 14"><path d="M4 13.500a4 4 0 0 1-.5-8A6.500 6.500 0 0 1 15.500 5 4.300 4.300 0 0 1 16 13.500z" fill="#aaa"/><path d="M4 13.500l2-5 5-2 9 4-3.500 3z" fill="#fff"/></svg>
    <span class="lang">ENG<br>INTL</span>
    <svg class="wf" viewBox="0 0 20 20"><g fill="none" stroke="#fff" stroke-width="1.500"><path d="M1 8a12.500 12.500 0 0 1 18 0M4 11.200a8.500 8.500 0 0 1 12 0M6.800 14.200a4.500 4.500 0 0 1 6.400 0"/></g><circle cx="10" cy="16.800" r="1.700" fill="#fff"/></svg>
    <svg class="vol" viewBox="0 0 20 20"><path d="M1 7.500h3.500L9 3v14l-4.500-4.500H1zM11.500 7q2 3 0 6M14 5q3.500 5 0 10M16.500 3q5 7 0 14" fill="none" stroke="#fff" stroke-width="1.300"/></svg>
    <svg class="bat" viewBox="0 0 20 20"><rect x="3" y="5" width="14" height="10" rx="2" fill="none" stroke="#fff" stroke-width="1.400"/><path d="M6 8h9v4.500H6zM18 8h1.500v4H18zM1 1h5v6q-2.500 2-5 0z" fill="#fff"/></svg>
    <span class="clock">16:11<br>05/09/2023</span>
    <b class="badge">5</b>
  </div>
</footer>

</div>
</body>
</html>
```
FILE: styles.css
```css
* { box-sizing: border-box; }
body { margin: 0; overflow: hidden; background: #222; font: 15px/20px "Open Sans", "Noto Sans", sans-serif; letter-spacing: -.35px; color: #111; }
svg { display: block; flex: none; }
i { font-style: normal; }
button { font: inherit; letter-spacing: inherit; color: inherit; padding: 0; border: 0; }
h1, h2, h3, p, ul, figure { margin: 0; padding: 0; font-weight: 400; }
.defs { position: absolute; width: 0; height: 0; }
.desktop { position: relative; width: 1920px; height: 1080px; overflow: hidden; white-space: nowrap; background: #4d3c3c; }
.win { position: absolute; overflow: hidden; display: flex; flex-direction: column; }
.i20 { width: 20px; height: 20px; }
.i30 { width: 30px; height: 30px; }
.wbtns { display: flex; margin-left: auto; }
.wbtns svg { width: 20px; height: 20px; }

/* browser windows */
.browser { width: 960px; background: #62d2d3; box-shadow: inset 0 0 0 1px #777; }
.browser.left { left: 0; top: 0; height: 510px; }
.browser.right { left: 959px; top: 0; width: 961px; height: 511px; border-radius: 10px 10px 0 0; }
.titlebar { height: 50px; flex: none; display: flex; align-items: center; margin: 1px 1px 0; background: #32a5a9; box-shadow: inset 0 -2px 1px #2b8f93; }
.ws { margin: 10px 0 0 20px; }
.tab { align-self: flex-end; display: flex; align-items: center; width: 301px; height: 40px; margin-left: 18px; padding: 0 11px 1px 15px; background: #62d2d3; border-radius: 8px 8px 0 0; letter-spacing: -.24px; box-shadow: 0 0 2px #1b7f83; }
.tab span { margin-left: 12px; flex: 1; }
.tabx { width: 18px; height: 18px; margin-top: 2px; }
.newtab { width: 20px; height: 20px; margin: 10px 0 0 12px; }
.browser .wbtns { align-self: flex-start; margin-top: 14px; gap: 38px; margin-right: 17px; color: #1c6a6d; }
.left .wbtns { margin-right: 18px; }
.toolbar { display: flex; align-items: center; height: 48px; padding-left: 8px; flex: none; }
.cell { width: 55.2px; display: flex; justify-content: center; }
.cell.wide { width: 58px; }
.address { display: flex; align-items: center; width: 379px; height: 38px; margin: 0 6px 0 8px; padding: 0 21px 0 22px; border-radius: 19px; background: #a7e5e4; box-shadow: 0 0 3px #56c4c5; }
.right .address { margin-right: 7px; }
.url { flex: 1; margin-left: 19px; font-size: 17.500px; letter-spacing: -.41px; color: #000; position: relative; top: -1px; }
.dim { color: #666; }
.right .url { letter-spacing: -.45px; }
.st { margin-left: 29px; }
.favbar { display: flex; align-items: center; height: 42px; flex: none; padding: 0 21px 4px 19px; }
.favbar span { display: flex; align-items: center; gap: 9px; letter-spacing: -.4px; }
.favbar .f1 { width: 130px; letter-spacing: -.02px; }
.f2 { width: 98px; } .f3 { width: 118px; } .f4 { width: 101px; } .f5 { width: 109px; }
.tri { width: 14px; height: 12px; }
.tri.grey { margin-left: auto; color: #39797b; }
.content { display: flex; flex: 1; min-height: 0; padding-left: 6px; }
.left .content { padding-bottom: 5px; }
.page { width: 878px; background: #071a28; border-radius: 10px 0 0 10px; color: #eee; overflow: hidden; font-family: Inter, "Open Sans", sans-serif; font-size: 20px; letter-spacing: .55px; }
.right .page { width: 879px; border-bottom-left-radius: 12px; }
.scroll { width: 21px; background: #fcfcfc; border-radius: 0 10px 10px 0; display: flex; flex-direction: column; align-items: center; color: #8b8b8b; }
.scroll svg { width: 12px; height: 12px; margin-top: 8px; }
.scroll .thumb { width: 11px; height: 57px; border-radius: 6px; background: #8b8b8b; margin-top: 8px; }
.right .scroll .thumb { margin-top: 92px; }
.scroll .end { margin: auto 0 7px; }
.side { width: 54px; display: flex; flex-direction: column; align-items: center; }
.apps { height: 223px; width: 54px; overflow: hidden; display: flex; flex-direction: column; align-items: center; gap: 30px; padding-top: 10px; border-bottom: 1px solid #4aaeb0; flex: none; }
.right .apps { height: 228px; }
.apps svg { width: 20px; height: 20px; }
.apps .img { width: 23px; height: 22px; margin: 0 0 -1px; }
.side .tri { margin-top: 12px; color: #000; }
.add { width: 17px; height: 17px; margin-top: 29px; }
.side hr { width: 35px; border: 0; border-top: 1px solid #459fa1; margin: 20px 0 0; }
.gear { width: 24px; height: 24px; margin-top: 15px; }
.hero { padding-left: 87px; }
.hero nav { display: flex; align-items: center; height: 126px; letter-spacing: .3px; }
.logo { width: 344px; font: italic 700 38px/40px "Liberation Serif", serif; letter-spacing: -1.400px; color: #3bdbff; }
.hero nav a { width: 145px; }
.hero nav a + a { width: 133px; }
.hero h1 { font-size: 52px; line-height: 60px; font-weight: 600; letter-spacing: -.35px; margin-top: 88px; }
.hero h2 { font-size: 29.500px; line-height: 34px; font-weight: 600; letter-spacing: .6px; color: #3bdbff; }
.hero p { margin-top: 40px; line-height: 30px; letter-spacing: .5px; }
.bio { padding: 12px 0 0 88px; }
.bio p { line-height: 30px; letter-spacing: .53px; }
.ctas { display: flex; gap: 57px; margin-top: 12px; }
.cta { width: 187px; height: 63px; line-height: 58px; border: 2px solid #3bdbff; border-radius: 10px; text-align: center; font-weight: 600; color: #3bdbff; letter-spacing: .3px; }
.cta.solid { background: #3bdbff; color: #071a28; }

/* file explorer */
.explorer { left: 0; top: 509px; width: 963px; height: 511px; background: #fff; border-top: 1px solid #888; border-right: 1px solid #aaa; border-radius: 0 10px 0 0; }
.extitle { height: 50px; flex: none; display: flex; align-items: center; padding: 0 20px 0 6px; background: linear-gradient(90deg, #dbd8d8, #e4d6d6 45%, #e5d5d5 55%, #dfd8d7 75%); border-bottom: 1px solid #d3cbcb; }
.extab { align-self: flex-end; display: flex; align-items: center; width: 300px; height: 39px; margin-bottom: -1px; padding: 0 17px 2px 12px; background: #f5f3f3; border-radius: 9px 9px 0 0; }
.extab span { margin: 0 16px 0 13px; width: 206px; overflow: hidden; letter-spacing: .02px; }
.extab .i20 { width: 18px; height: 18px; }
.fold { width: 19px; height: 16px; }
.explus { width: 14px; height: 14px; margin-left: 24px; }
.extitle .wbtns { margin-bottom: 13px; gap: 38px; color: #000; }
.cmds { height: 68px; flex: none; display: flex; align-items: center; padding-left: 21px; background: linear-gradient(90deg, #f4f4f4, #f8f1f1 50%, #f4f3f2 80%); border-bottom: 1px solid #cfc9ca; }
.cmd { display: flex; align-items: center; letter-spacing: -.4px; }
.cv { width: 8px; height: 8px; margin-left: 8px; color: #555; }
.new { width: 98px; } .new .i20, .sort .i20 { margin-right: 11px; }
.grp { display: flex; align-items: center; gap: 40px; height: 40px; width: 367px; padding-left: 22px; border: solid #e2dede; border-width: 0 1px; }
.sort { margin-left: 20px; width: 108px; }
.view { width: 101px; height: 40px; border-right: 1px solid #e2dede; } .view .i20 { margin-right: 10px; }
.more { width: 24px; height: 24px; margin-left: 19px; }
.navrow { height: 65px; flex: none; display: flex; align-items: center; padding: 0 12px 2px 14px; color: #555; }
.nb { width: 16px; height: 16px; } .fwd { transform: scaleX(-1); margin-left: 28px; opacity: .55; } .nc { width: 13px; height: 13px; margin-left: 24px; } .parent { transform: rotate(90deg); margin-left: 21px; }
.path { display: flex; align-items: center; width: 384px; height: 44px; margin-left: 19px; padding: 0 13px 0 11px; border: 1px solid #d5d5d5; color: #111; }
.p0 { margin-left: 7px; } .p1 { margin-left: 11px; width: 40px; } .cr { width: 11px; height: 11px; margin-left: 8px; color: #555; }
.p2 { margin-left: 6px; width: 117px; letter-spacing: -.28px; } .p2 + .cr { margin-left: 6px; } .nc2 { width: 14px; height: 14px; margin-left: auto; color: #555; } .rf { width: 17px; height: 17px; margin-left: 28px; color: #666; }
.search { display: flex; align-items: center; justify-content: space-between; flex: 1; height: 44px; margin-left: 12px; padding: 0 18px 0 9px; border: 1px solid #d5d5d5; color: #6d6d6d; letter-spacing: -.37px; }
.search svg { width: 15px; height: 15px; }
.exbody { display: flex; flex: 1; min-height: 0; }
.tree { width: 170px; list-style: none; overflow: hidden; }
.tree li { display: flex; align-items: center; height: 40px; padding-left: 38px; }
.tree li svg { width: 20px; height: 19px; }
.tree span { margin-left: 5px; width: 89px; letter-spacing: -.5px; }
.tree .od { padding-left: 12px; } .tree .od .arr { width: 11px; height: 12px; margin-right: 15px; color: #777; } .tree .od span { width: 107px; overflow: hidden; letter-spacing: -.35px; flex: none; }
.tree .rule { padding: 0; border-top: 1px solid #d0d0d0; width: 151px; margin-left: 8px; margin-top: 20px; height: 20px; }
.tree .pin { width: 14px; height: 14px; }
.exscroll { width: 20px; background: #f0f0f0; flex: none; }
.exscroll i { display: block; width: 6px; height: 163px; margin: 21px 0 0 7px; background: #868686; }
.exscroll.r i { height: 239px; margin-top: 56px; }
.files { flex: 1; display: grid; grid-template-columns: repeat(5, 145px); grid-auto-rows: 148px; margin-top: -42px; padding-left: 15px; clip-path: inset(42px 0 0 0); }
.files figure { display: flex; flex-direction: column; align-items: center; justify-content: flex-start; }
.files figcaption { margin-top: 0; letter-spacing: -.5px; }
.big { width: 120px; height: 120px; }
.css { width: 88px; height: 116px; margin: 2px 0; }
.bf { height: 120px; padding-top: 3px; }
.bfb { width: 106px; height: 94px; }
.art { width: 106px; height: 24px; margin-top: -55px; }
.bff { width: 106px; height: 39px; margin-top: -5px; }

/* xampp control panel */
.xampp { left: 962px; top: 511px; width: 958px; height: 509px; background: #f0f0f0; border-right: 1px solid #777; border-bottom: 2px solid #888; border-left: 1px solid #999; font: 13px/17px "Liberation Sans", sans-serif; letter-spacing: .12px; box-shadow: inset 14px 0 14px -8px #ccc; }
.xtitle { height: 39px; flex: none; display: flex; align-items: center; padding: 0 21px 2px 8px; background: #f3f3f3; border-bottom: 1px solid #ddd; color: #8a8a8a; font: 15px/20px "Open Sans", sans-serif; letter-spacing: -.35px; }
.xt { margin-left: 6px; width: 196px; } .xtitle .wbtns { gap: 38px; color: #777; }
.xmain { display: flex; height: 268px; flex: none; padding-left: 7px; }
.xleft { width: 703px; }
.xhead { display: flex; height: 51px; padding-top: 7px; }
.xhead svg { width: 40px; height: 37px; margin-left: -1px; } .xhead h3 { margin-left: 83px; font-size: 22px; line-height: 36px; letter-spacing: .18px; }
.modules { border: 2px solid #e1e1e1; height: 212px; }
.legend { display: block; width: max-content; padding: 0 4px; background: #f0f0f0; }
.modules .legend { margin: -10px 0 0 7px; line-height: 17px; letter-spacing: .15px; }
.mrow { display: grid; grid-template-columns: 67px 85px 80px 126px 72px 72px 72px 72px; column-gap: 0; align-items: center; text-align: center; height: 35.300px; }
.mrow > span { position: relative; top: -1px; }
.mrow > .port { text-align: right; }
.mrow button { height: 26px; transform: translateX(18px); background: #fdfdfd; border: 1px solid #d3d3d3; border-bottom-color: #bbb; border-radius: 5px; }
.mrow button + button { margin-left: 9px; margin-right: -9px; }
.mrow button + button + button { margin-left: 18px; margin-right: -18px; }
.mrow button + button + button + button { margin-left: 27px; margin-right: -27px; }
.mrow .off { color: #999; background: #f6f6f6; border-color: #eaeaea; }
.box { width: 24px; height: 24px; margin-left: 23px; border-radius: 4px; background: #f8f8f8; border: 1px solid #ebebeb; }
.mh { height: 20px; margin: 0 0 2px; font-weight: 700; font-size: 15px; letter-spacing: -.2px; } .mh .act { padding-left: 22px; text-align: left; }
.mrow .on { background: #c6ffc0; line-height: 21px; }
.tools { display: flex; flex-direction: column; gap: 10.500px; padding: 8px 0 0 11px; }
.tools button { display: flex; align-items: center; justify-content: center; gap: 5px; width: 103px; height: 27px; background: #fdfdfd; border: 1px solid #d3d3d3; border-radius: 5px; letter-spacing: .15px; }
.tools .focus, .dialog .focus { border: 1.500px solid #1b7fd0; }
.log { margin: 2px 10px 0 7px; height: 171px; padding: 4px 0 0 3px; flex: none; border: 1px solid #a5a5ad; font-size: 16px; line-height: 20px; letter-spacing: .12px; background: linear-gradient(90deg, #eee, #fff 40px); }
.log div { display: grid; grid-template-columns: 72px 107px auto; } .log time { color: #888; } .log b { font-weight: 400; color: #2424f0; } .log .bl { color: #2424f0; }
.status { margin-top: auto; height: 22px; border-top: 1px solid #d9d9d9; display: flex; justify-content: flex-end; align-items: flex-end; } .status svg { width: 14px; height: 14px; }

/* configuration dialog */
.dialog { left: 1499px; top: 688px; width: 398px; height: 315px; border-radius: 10px; background: #f0f0f0; border: 1px solid #aaa; font: 13.500px/18px "DejaVu Sans Condensed", sans-serif; letter-spacing: -.2px; box-shadow: 0 8px 26px 4px rgba(0,0,0,.28); overflow: visible; }
.dtitle { height: 38px; flex: none; display: flex; align-items: center; padding: 0 20px 0 10px; background: #f3f3f3; border-radius: 10px 10px 0 0; color: #8a8a8a; font: 15px/20px "Open Sans", sans-serif; letter-spacing: -.32px; }
.dtitle span { margin-left: 6px; } .dtitle .wbtns { gap: 38px; color: #777; }
.dbody { padding: 0 12px 0 8px; }
.dbody label { display: flex; } .l1 { padding: 10px 0 0 1px; height: 30px; } .l2 { height: 28px; padding-top: 4px; }
.irow { display: flex; align-items: center; justify-content: space-between; height: 29px; } .input { width: 331px; height: 25px; margin-left: 3px; padding: 2px; background: #fff; border-bottom: 1.500px solid #888; }
.irow button { display: flex; align-items: center; justify-content: center; width: 32px; height: 30px; background: #fdfdfd; border: 1px solid #ccc; border-radius: 5px; } .irow svg { width: 18px; height: 14px; }
.auto { height: 115px; margin-top: 13px; border: 1px solid #ddd; } .auto .legend { margin: -9px 0 0 8px; letter-spacing: 0; }
.checks { display: grid; grid-template-columns: 135px 122px auto; grid-auto-rows: 29px; margin: 5px 0 0 9px; align-items: center; }
.dbody i { width: 16px; height: 16px; margin-right: 4px; border: 1.500px solid #777; border-radius: 4px; background: #f5f5f5; flex: none; }
.tc { padding-top: 5px; }
.auto p { margin-left: 9px; color: #2424f0; font-size: 14.500px; line-height: 17.500px; letter-spacing: .35px; }
.dfoot { position: relative; height: 27px; overflow: hidden; display: flex; margin-top: 1px; }
.dfoot button { display: flex; align-items: center; justify-content: center; gap: 9px; width: 95px; height: 34px; margin: -17px 0 0 174px; background: #fdfdfd; border: 1px solid #d0d0d0; border-radius: 5px; padding-top: 7px; } .dfoot svg { width: 14px; height: 14px; }
.dfoot .save { margin-left: 10px; width: 96px; } .save svg { width: 18px; }
.dfoot .mini { position: absolute; left: 0; top: 6px; width: 232px; padding: 0 0 4px 11px; background: #f0f0f0; }

/* taskbar */
.taskbar { position: absolute; left: 0; top: 1020px; width: 1920px; height: 60px; display: flex; align-items: center; padding: 0 0 1px 13px; border-top: 1px solid #555; background: linear-gradient(90deg, #242423 0 10%, #1d2731 14%, #1e2831 21%, #262523 27% 38%, #23212a 46%, #1e211d 52%, #1d2c1e 60%, #222420 64%, #3a221b 68%, #22202c 72%, #22202b 88%, #232323); }
.weather { width: 30px; height: 30px; }
.start { width: 30px; height: 30px; margin-left: 486px; }
.tsearch { display: flex; align-items: center; width: 273px; height: 38px; margin-left: 18px; padding: 0 5px 0 14px; border-radius: 19px; background: #f3f3f3; } .mag { width: 19px; height: 19px; } .tsearch span { flex: 1; margin-left: 12px; font-size: 17px; letter-spacing: -.3px; color: #555; } .bing { width: 28px; height: 28px; }
.tasks { display: flex; gap: 5.100px; margin-left: 6px; } .tasks span { position: relative; display: flex; align-items: center; justify-content: center; width: 50px; height: 50px; border-radius: 5px; } .tasks svg { width: 30px; height: 30px; }
.tasks .active { background: #343434; } .tasks .active::after, .run::after { content: ""; position: absolute; bottom: 0; width: 20px; height: 4px; border-radius: 2px; background: #4cc2ff; } .run::after { width: 7px; background: #999; }
.tray { display: flex; align-items: center; margin-left: auto; padding-right: 25px; color: #fff; letter-spacing: -.28px; } .up { width: 14px; height: 14px; } .cl { width: 20px; height: 14px; margin-left: 23px; } .lang { width: 32px; margin-left: 21px; text-align: center; } .wf { width: 20px; height: 20px; margin-left: 22px; } .vol { width: 20px; height: 20px; margin-left: 9px; } .bat { width: 22px; height: 22px; margin-left: 11px; } .clock { width: 78px; margin-left: 18px; text-align: right; } .badge { width: 20px; height: 20px; margin-left: 9px; border-radius: 50%; background: #4cc2ff; color: #111; font-size: 12px; font-weight: 400; text-align: center; }
```
